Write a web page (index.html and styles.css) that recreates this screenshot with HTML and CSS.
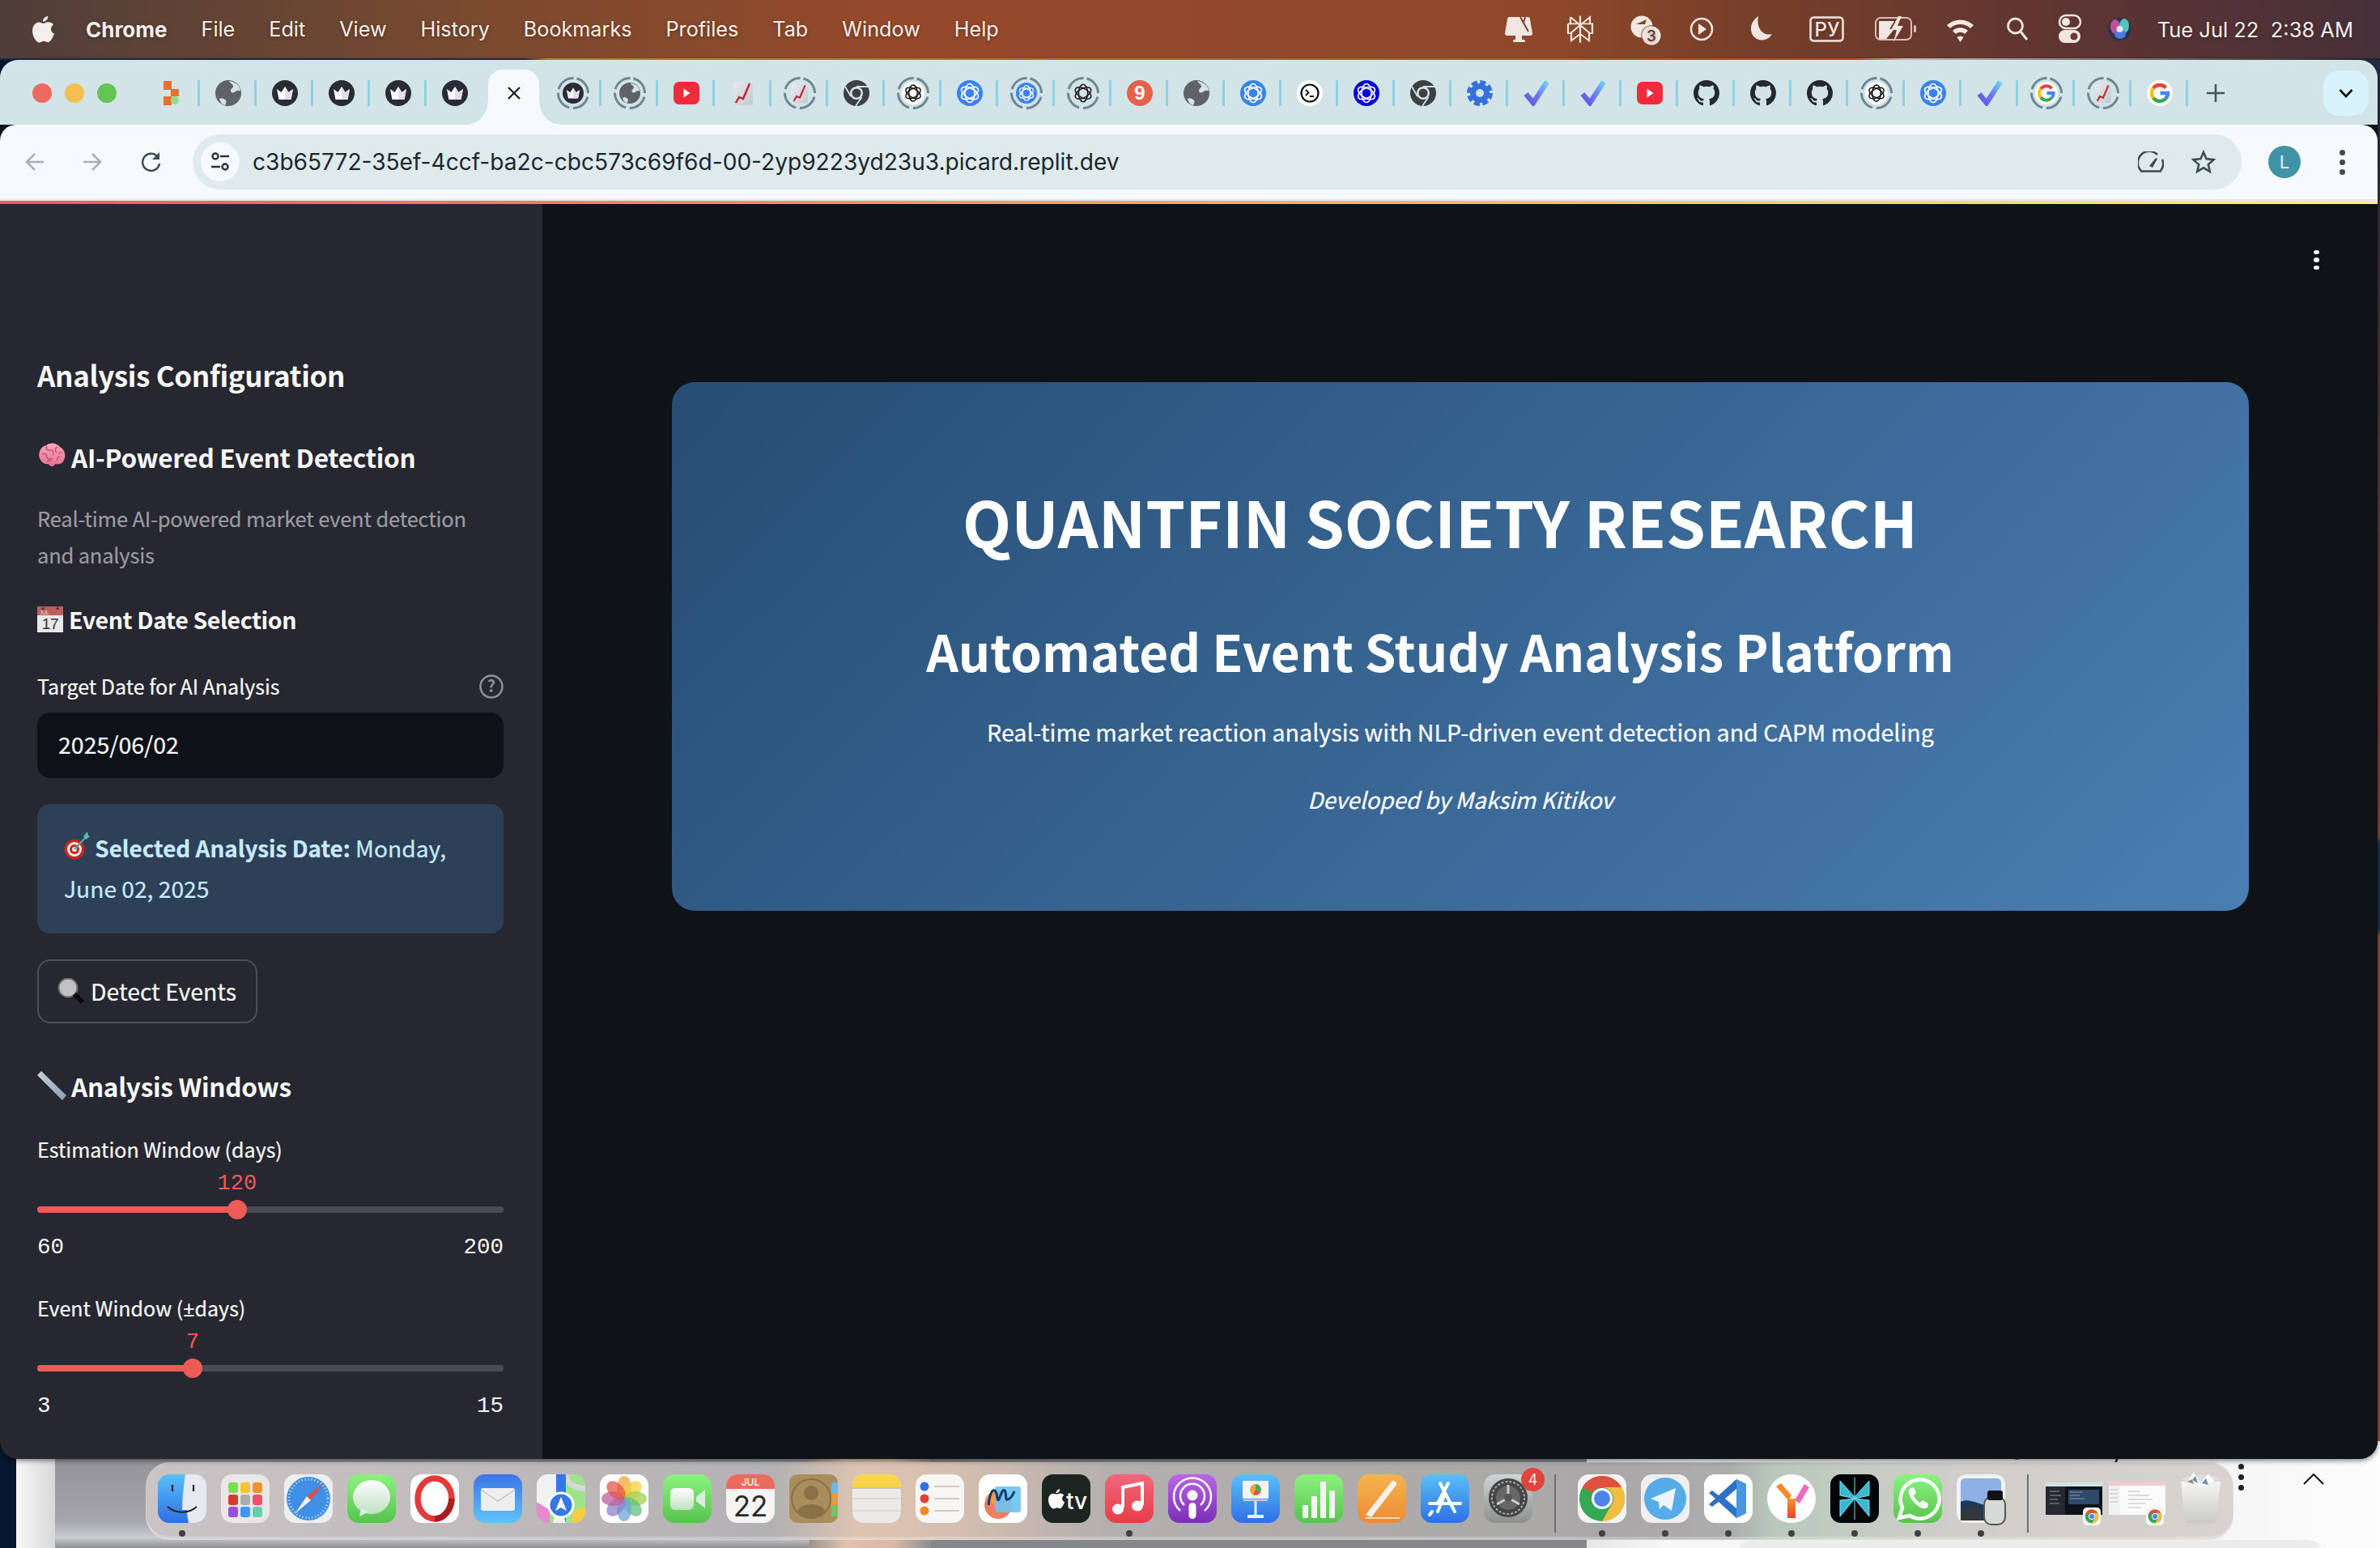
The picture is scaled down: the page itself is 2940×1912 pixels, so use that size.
FILE: index.html
```html
<!DOCTYPE html>
<html lang="en">
<head>
<meta charset="utf-8">
<title>Automated Event Study Analysis Platform</title>
<link rel="stylesheet" href="styles.css">
</head>
<body>
<svg class="defs" xmlns="http://www.w3.org/2000/svg">
  <defs>
    <linearGradient id="chk" x1="0" y1="1" x2="1" y2="0"><stop offset="0" stop-color="#6b4fe0"/><stop offset=".5" stop-color="#6d7cf0"/><stop offset="1" stop-color="#6fd2f4"/></linearGradient>
    <linearGradient id="chartbg" x1="0" y1="0" x2="1" y2="1"><stop offset="0" stop-color="#e8eaee"/><stop offset="1" stop-color="#c3c8d0"/></linearGradient>
    <linearGradient id="gBlue" x1="0" y1="0" x2="0" y2="1"><stop offset="0" stop-color="#5ac0f8"/><stop offset="1" stop-color="#2f6fe6"/></linearGradient>
    <linearGradient id="gBlueUp" x1="0" y1="0" x2="0" y2="1"><stop offset="0" stop-color="#3a75e8"/><stop offset="1" stop-color="#5fc4fa"/></linearGradient>
    <linearGradient id="gGreen" x1="0" y1="0" x2="0" y2="1"><stop offset="0" stop-color="#8cf27e"/><stop offset="1" stop-color="#56c44e"/></linearGradient>
    <linearGradient id="gRed" x1="0" y1="0" x2="0" y2="1"><stop offset="0" stop-color="#f0687a"/><stop offset="1" stop-color="#e83c48"/></linearGradient>
    <linearGradient id="gPurple" x1="0" y1="0" x2="0" y2="1"><stop offset="0" stop-color="#bb66e8"/><stop offset="1" stop-color="#7a2db8"/></linearGradient>
    <linearGradient id="gOrange" x1="0" y1="0" x2="0" y2="1"><stop offset="0" stop-color="#f6b44c"/><stop offset="1" stop-color="#ee8a38"/></linearGradient>
    <linearGradient id="gSteel" x1="0" y1="0" x2="0" y2="1"><stop offset="0" stop-color="#cfd6d8"/><stop offset="1" stop-color="#8e8e8e"/></linearGradient>
    <linearGradient id="gBubble" x1="0" y1="0" x2="0" y2="1"><stop offset="0" stop-color="#ffffff"/><stop offset="1" stop-color="#bfe0c4"/></linearGradient>
    <linearGradient id="gTrash" x1="0" y1="0" x2="0" y2="1"><stop offset="0" stop-color="#f4f4f4"/><stop offset="1" stop-color="#c9c9c7"/></linearGradient>
    <linearGradient id="gY" x1="0" y1="0" x2="0" y2="1"><stop offset="0" stop-color="#f49a2a"/><stop offset="1" stop-color="#ec3f2c"/></linearGradient>
    <linearGradient id="gBrain" x1="0" y1="0" x2="0" y2="1"><stop offset="0" stop-color="#f7a8bd"/><stop offset="1" stop-color="#e2708e"/></linearGradient>
    <linearGradient id="gRuler" x1="0" y1="0" x2="1" y2="1"><stop offset="0" stop-color="#c7d0dc"/><stop offset="1" stop-color="#8d9cb0"/></linearGradient>
    <symbol id="apple" viewBox="0 0 28 34"><path d="M20 0c.3 3-2.600 7-6.500 7C13 3.500 16.300.4 20 0zM14 9c1.600 0 3.500-1.700 6.500-1.700 2.300 0 4.900 1 6.500 3.500-4.600 2.700-4 9.500 1 11.500-1.500 4.200-4.500 11-8 11-2 0-3-1.400-5.300-1.400S11 33.800 9 33.800C5 33.800 0 25.500 0 18.800 0 12 4.200 7.600 8.500 7.600c2.300 0 4 1.400 5.500 1.400z"/></symbol>
    <symbol id="ring" viewBox="0 0 40 40"><circle cx="20" cy="20" r="18.500" fill="none" stroke="#6d8891" stroke-width="3" stroke-dasharray="24.300 4.750" transform="rotate(-76 20 20)"/></symbol>
    <symbol id="crown" viewBox="0 0 32 32"><circle cx="16" cy="16" r="16" fill="#292b36"/><path d="M6 11l5.500 4L16 8l4.500 7L26 11l-2.500 13h-15z" fill="#fff"/><path d="M16 8l4.500 7L26 11l-2.500 13H16z" fill="#dfe1e6"/></symbol>
    <symbol id="globe" viewBox="0 0 32 32"><circle cx="16" cy="16" r="16" fill="#5f6368"/><path d="M17 1c1 3 4 3 5 6 1 2-3 3-3 6s4 3 6 1 4-1 6-1c-.500-6-6-11-14-12zM5 23c3-2 6 0 8 2 1 2 0 4-1 6-4-1-6-4-7-8z" fill="#d3e4e9"/></symbol>
    <symbol id="knot" viewBox="0 0 32 32"><g fill="none" stroke="currentColor" stroke-width="1.600"><ellipse cx="16" cy="16" rx="6" ry="11.500"/><ellipse cx="16" cy="16" rx="6" ry="11.500" transform="rotate(60 16 16)"/><ellipse cx="16" cy="16" rx="6" ry="11.500" transform="rotate(120 16 16)"/></g></symbol>
    <symbol id="kblue" viewBox="0 0 32 32"><circle cx="16" cy="16" r="16" fill="#3a82ee"/><use href="#knot" color="#fff"/></symbol>
    <symbol id="knavy" viewBox="0 0 32 32"><circle cx="16" cy="16" r="16" fill="#0505dc"/><use href="#knot" color="#fff"/></symbol>
    <symbol id="kwhite" viewBox="0 0 32 32"><circle cx="16" cy="16" r="16" fill="#fff"/><use href="#knot" color="#111"/></symbol>
    <symbol id="kplain" viewBox="0 0 32 32"><use href="#knot" color="#1c1c1c"/></symbol>
    <symbol id="yt" viewBox="0 0 32 32"><rect x="0" y="2" width="32" height="28" rx="7" fill="#ee2c3c"/><path d="M12.500 10.500l8 5.500-8 5.500z" fill="#fff"/></symbol>
    <symbol id="chart" viewBox="0 0 32 32"><rect x="4" y="2" width="24" height="29" rx="2" fill="url(#chartbg)"/><path d="M7 28l4-7 5 2 3-7 5-12" fill="none" stroke="#c3202c" stroke-width="2.400"/></symbol>
    <symbol id="cdark" viewBox="0 0 32 32"><circle cx="16" cy="16" r="16" fill="#3c4043"/><circle cx="16" cy="16" r="8" fill="#d3e4e9"/><circle cx="16" cy="16" r="5.500" fill="#3c4043"/><path d="M16 8h15M9 20L2 8M22.500 21L15 32" stroke="#d3e4e9" stroke-width="1.800"/></symbol>
    <symbol id="nine" viewBox="0 0 32 32"><circle cx="16" cy="16" r="16" fill="#e5614a"/><text x="16" y="24" text-anchor="middle" class="svgt-nine">9</text></symbol>
    <symbol id="term" viewBox="0 0 32 32"><circle cx="16" cy="16" r="16" fill="#fff"/><circle cx="16" cy="16" r="10.500" fill="none" stroke="#111" stroke-width="2.200"/><path d="M11 12l3.500 3.500L11 19M16 20h5" fill="none" stroke="#111" stroke-width="1.800"/></symbol>
    <symbol id="gear" viewBox="0 0 32 32"><circle cx="16" cy="16" r="13" fill="none" stroke="#3571dc" stroke-width="6" stroke-dasharray="6.800 3.400"/><circle cx="16" cy="16" r="8.500" fill="none" stroke="#3571dc" stroke-width="7"/></symbol>
    <symbol id="check" viewBox="0 0 32 32"><path d="M3 17l9 11L29 2" fill="none" stroke="url(#chk)" stroke-width="6.500"/></symbol>
    <symbol id="gh" viewBox="0 0 16 16"><path fill="#24282f" d="M8 0C3.580 0 0 3.580 0 8c0 3.540 2.290 6.530 5.470 7.590.4.070.55-.17.55-.38 0-.19-.01-.82-.01-1.490-2.010.37-2.530-.49-2.690-.94-.09-.23-.48-.94-.82-1.130-.28-.15-.68-.52-.01-.53.63-.01 1.080.58 1.230.82.72 1.210 1.870.87 2.330.66.07-.52.28-.87.51-1.070-1.780-.2-3.640-.89-3.640-3.950 0-.87.31-1.590.82-2.150-.08-.2-.36-1.020.08-2.120 0 0 .67-.21 2.200.82.64-.18 1.320-.27 2-.27.68 0 1.360.09 2 .27 1.530-1.040 2.200-.82 2.200-.82.44 1.100.16 1.920.08 2.120.51.56.82 1.270.82 2.150 0 3.070-1.870 3.750-3.650 3.950.29.25.54.73.54 1.480 0 1.070-.01 1.930-.01 2.200 0 .21.15.46.55.38A8.013 8.013 0 0016 8c0-4.420-3.580-8-8-8z"/></symbol>
    <symbol id="goog" viewBox="0 0 32 32"><circle cx="16" cy="16" r="16" fill="#fff"/><g fill="none" stroke-width="4.500"><path d="M23.500 9.500A10 10 0 0 0 8 10" stroke="#ea4335"/><path d="M8 10a10 10 0 0 0 0 12" stroke="#fbbc05"/><path d="M8 22a10 10 0 0 0 15 1" stroke="#34a853"/><path d="M23 23a10 10 0 0 0 3-7H16.500" stroke="#4285f4"/></g></symbol>
    <symbol id="figm" viewBox="0 0 32 32"><rect x="6" y="1" width="10" height="11" fill="#e9702f"/><rect x="15" y="11" width="10" height="9" fill="#e9702f"/><rect x="6" y="20" width="10" height="11" fill="#e9702f"/><circle cx="20" cy="25" r="5" fill="#8ee08a"/></symbol>
    <symbol id="chrome" viewBox="0 0 60 60"><circle cx="30" cy="30" r="28" fill="#34a853"/><path d="M30 2a28 28 0 0 1 24.200 14H30a14 14 0 0 0-12.100 7L5.800 16A28 28 0 0 1 30 2z" fill="#e0513f"/><path d="M54.200 16A28 28 0 0 1 30 58l12.100-21A14 14 0 0 0 30 16z" fill="#f3bd42"/><circle cx="30" cy="30" r="13" fill="#fff"/><circle cx="30" cy="30" r="10" fill="#4d83ea"/></symbol>
  </defs>
</svg>

<div class="desktop">
  <header class="menubar">
    <svg class="apple-logo" width="27" height="33"><use href="#apple"/></svg>
    <span class="menu-app">Chrome</span>
    <span>File</span><span>Edit</span><span>View</span><span>History</span><span>Bookmarks</span><span>Profiles</span><span>Tab</span><span>Window</span><span>Help</span>
    <div class="status">
      <svg class="st" width="39" height="40"><path d="M7 5h22c2 0 3 1 3 3l3 17c0 2-1 3-3 3H4c-2 0-3-1-3-3L4 8c0-2 1-3 3-3z" class="st-f"/><path d="M20 5l10 18M24 12l2-7" fill="none" stroke="#7a4030" stroke-width="2"/><rect x="14" y="28" width="8" height="6" class="st-f"/><rect x="11" y="33" width="15" height="3" rx="1.500" class="st-f"/></svg>
      <svg class="st" width="38" height="40"><g class="st-s" transform="translate(0 3.500) scale(1 .83)"><path d="M15 0v40M3 2l12 12L27 2v10M3 2v10M0 12h30v14h-4M0 12v14h4M15 14L4 25v12l11-10 11 10V25z"/></g></svg>
      <svg class="st" width="33" height="40"><circle cx="13" cy="17" r="13.500" class="st-f"/><path d="M6 14l13-6-2 6z" fill="#7d4530"/><circle cx="25" cy="28" r="13" fill="#7d4530" fill-opacity=".6"/><circle cx="25" cy="28" r="11.500" class="st-f"/><text x="25" y="35" text-anchor="middle" class="svgt-three">3</text></svg>
      <svg class="st" width="33" height="40"><circle cx="14" cy="20" r="13" fill="none" stroke="#f2e6e2" stroke-width="2.500"/><path d="M10 13l10 7-10 7z" class="st-f"/></svg>
      <svg class="st" width="34" height="40"><path d="M11 4C4 9 0 16 3 25c3 9 15 11 22 5 1-1 2-3 3-4-10 3-20-6-17-22z" class="st-f"/></svg>
      <svg class="st" width="41" height="40"><rect x="1.500" y="1.500" width="40" height="29" rx="4" transform="translate(0 4)" fill="none" stroke="#f2e6e2" stroke-width="2.500"/><text x="22" y="29" text-anchor="middle" class="svgt-py">РУ</text></svg>
      <svg class="st" width="48" height="40"><rect x="1" y="6" width="44" height="27" rx="6" fill="none" stroke="#d9bfb6" stroke-width="2"/><rect x="48" y="15" width="3" height="9" rx="1.500" fill="#d9bfb6"/><path d="M5 10h19l-6 10h6L14 32H5z" class="st-f"/><path d="M29 4L20 21h7l-4 15 12-20h-7l5-12z" class="st-f"/></svg>
      <svg class="st" width="35" height="40"><path d="M1 15a24 24 0 0 1 33 0l-4 4a18 18 0 0 0-25 0z" class="st-f"/><path d="M8 22a14 14 0 0 1 19 0l-4 4a8 8 0 0 0-11 0z" class="st-f"/><path d="M17.500 36l-4-6a6 6 0 0 1 8 0z" class="st-f"/></svg>
      <svg class="st" width="24" height="40"><circle cx="10.500" cy="16" r="9" fill="none" stroke="#f2e6e2" stroke-width="2.800"/><path d="M17 23l8 10" stroke="#f2e6e2" stroke-width="3"/></svg>
      <svg class="st" width="22" height="40"><rect x="1" y="3" width="26" height="16" rx="8" fill="none" stroke="#f2e6e2" stroke-width="2.500"/><circle cx="9" cy="11" r="5" class="st-f"/><rect x="0" y="21" width="27" height="16" rx="8" class="st-f"/><circle cx="19" cy="29" r="4.500" fill="#6a3a30"/></svg>
      <svg class="st" width="20" height="40"><circle cx="13.500" cy="20" r="14" fill="#28344a"/><ellipse cx="8" cy="17" rx="6" ry="9" fill="#c04fa0"/><ellipse cx="19" cy="16" rx="6" ry="9" fill="#4fc4c0"/><ellipse cx="14" cy="26" rx="7" ry="6" fill="#4a7ce0"/><circle cx="13.500" cy="20" r="4" fill="#e8e4ee"/></svg>
      <span class="clock">Tue Jul 22&nbsp;&nbsp;2:38 AM</span>
    </div>
  </header>
  <div class="topstrip"></div>

  <section class="window">
    <div class="tabstrip">
      <div class="lights"><i class="light red"></i><i class="light yellow"></i><i class="light green"></i></div>
      <div class="tabs">
        <div class="tab"><svg class="ti"><use href="#figm"/></svg></div>
        <div class="tab"><svg class="ti"><use href="#globe"/></svg></div>
        <div class="tab"><svg class="ti"><use href="#crown"/></svg></div>
        <div class="tab"><svg class="ti"><use href="#crown"/></svg></div>
        <div class="tab"><svg class="ti"><use href="#crown"/></svg></div>
        <div class="tab no-sep"><svg class="ti"><use href="#crown"/></svg></div>
        <div class="tab-active"><svg class="close-x" width="16" height="16" viewBox="0 0 16 16"><path d="M1 1l14 14M15 1L1 15" stroke="#1c1c1c" stroke-width="2.200"/></svg></div>
        <div class="tab"><svg class="tr" viewBox="0 0 40 40"><use href="#ring"/><use href="#crown" x="7" y="7" width="26" height="26"/></svg></div>
        <div class="tab"><svg class="tr" viewBox="0 0 40 40"><use href="#ring"/><use href="#globe" x="7" y="7" width="26" height="26"/></svg></div>
        <div class="tab"><svg class="ti"><use href="#yt"/></svg></div>
        <div class="tab"><svg class="ti"><use href="#chart"/></svg></div>
        <div class="tab"><svg class="tr" viewBox="0 0 40 40"><use href="#ring"/><use href="#chart" x="7" y="7" width="26" height="26"/></svg></div>
        <div class="tab"><svg class="ti"><use href="#cdark"/></svg></div>
        <div class="tab"><svg class="tr" viewBox="0 0 40 40"><use href="#ring"/><use href="#kwhite" x="6" y="6" width="28" height="28"/></svg></div>
        <div class="tab"><svg class="ti"><use href="#kblue"/></svg></div>
        <div class="tab"><svg class="tr" viewBox="0 0 40 40"><use href="#ring"/><use href="#kblue" x="7" y="7" width="26" height="26"/></svg></div>
        <div class="tab"><svg class="tr" viewBox="0 0 40 40"><use href="#ring"/><use href="#kplain" x="5" y="5" width="30" height="30"/></svg></div>
        <div class="tab"><svg class="ti"><use href="#nine"/></svg></div>
        <div class="tab"><svg class="ti"><use href="#globe"/></svg></div>
        <div class="tab"><svg class="ti"><use href="#kblue"/></svg></div>
        <div class="tab"><svg class="ti"><use href="#term"/></svg></div>
        <div class="tab"><svg class="ti"><use href="#knavy"/></svg></div>
        <div class="tab"><svg class="ti"><use href="#cdark"/></svg></div>
        <div class="tab"><svg class="ti"><use href="#gear"/></svg></div>
        <div class="tab"><svg class="ti"><use href="#check"/></svg></div>
        <div class="tab"><svg class="ti"><use href="#check"/></svg></div>
        <div class="tab"><svg class="ti"><use href="#yt"/></svg></div>
        <div class="tab"><svg class="ti"><use href="#gh"/></svg></div>
        <div class="tab"><svg class="ti"><use href="#gh"/></svg></div>
        <div class="tab"><svg class="ti"><use href="#gh"/></svg></div>
        <div class="tab"><svg class="tr" viewBox="0 0 40 40"><use href="#ring"/><use href="#kwhite" x="6" y="6" width="28" height="28"/></svg></div>
        <div class="tab"><svg class="ti"><use href="#kblue"/></svg></div>
        <div class="tab"><svg class="ti"><use href="#check"/></svg></div>
        <div class="tab"><svg class="tr" viewBox="0 0 40 40"><use href="#ring"/><use href="#goog" x="6" y="6" width="28" height="28"/></svg></div>
        <div class="tab"><svg class="tr" viewBox="0 0 40 40"><use href="#ring"/><use href="#chart" x="7" y="7" width="26" height="26"/></svg></div>
        <div class="tab"><svg class="ti"><use href="#goog"/></svg></div>
      </div>
      <svg class="newtab" width="22" height="22" viewBox="0 0 22 22"><path d="M11 0v22M0 11h22" stroke="#44555c" stroke-width="2.600"/></svg>
      <div class="tabmenu"><svg width="18" height="12" viewBox="0 0 18 12"><path d="M1.500 2l7.500 8 7.500-8" fill="none" stroke="#111" stroke-width="2.600"/></svg></div>
    </div>

    <div class="toolbar">
      <svg class="nav-back" width="24" height="24" viewBox="0 0 24 24"><path d="M23 12H2M12 2L2 12l10 10" fill="none" stroke="#a9b0b3" stroke-width="2.500"/></svg>
      <svg class="nav-fwd" width="24" height="24" viewBox="0 0 24 24"><path d="M1 12h21M12 2l10 10-10 10" fill="none" stroke="#a9b0b3" stroke-width="2.500"/></svg>
      <svg class="nav-reload" width="25" height="24" viewBox="0 0 25 24"><path d="M21 6A10.500 10.500 0 1 0 23 14" fill="none" stroke="#3d4c52" stroke-width="2.500"/><path d="M23 0v9h-9z" fill="#3d4c52"/></svg>
      <div class="omnibox">
        <span class="site-chip"><svg width="24" height="26" viewBox="0 0 24 26"><g fill="none" stroke="#27343a" stroke-width="2.400"><circle cx="6" cy="6" r="3.500"/><path d="M12 6h11M1 19h11"/><circle cx="18" cy="19" r="3.500"/></g></svg></span>
        <span class="url">c3b65772-35ef-4ccf-ba2c-cbc573c69f6d-00-2yp9223yd23u3.picard.replit.dev</span>
        <svg class="omni-gauge" width="32" height="26" viewBox="0 0 32 26"><path d="M4 24A14 14 0 1 1 24 4M30 10a14 14 0 0 1-2 14M3 24.500h26" fill="none" stroke="#3d4c52" stroke-width="2.500"/><path d="M14 18l8-10 2 1-6 11z" fill="#3d4c52"/></svg>
        <svg class="omni-star" width="30" height="30" viewBox="0 0 30 30"><path d="M15 3l3.600 8.300 9 .8-6.800 6 2 8.800L15 22.300l-7.800 4.600 2-8.800-6.800-6 9-.8z" fill="none" stroke="#3d4c52" stroke-width="2.600"/></svg>
      </div>
      <div class="avatar">L</div>
      <div class="kebab dark"><i></i><i></i><i></i></div>
    </div>
    <div class="accent"></div>

    <div class="app">
      <aside class="sidebar">
        <h2 class="sb-title">Analysis Configuration</h2>
        <h3 class="sb-h3 first-h3">
          <svg class="emoji" width="36" height="36" viewBox="0 0 36 36"><path d="M4 22C0 16 3 6 11 4c5-4 13-3 17 2 6 3 8 11 5 16-1 5-7 6-11 5-2 5-7 3-8 0-4 1-8-1-10-5z" fill="url(#gBrain)"/><path d="M12 5c-2 3 1 6 4 5s5 3 3 6M25 6c-3 1-4 5-1 7M6 15c3-2 6 0 6 3s5 4 7 2M28 18c-2 0-4 2-3 5M31 13c-2-1-4 0-4 2M12 24c2-2 4-2 5 0" fill="none" stroke="#c94f72" stroke-width="1.500"/></svg>
          <span>AI-Powered Event Detection</span>
        </h3>
        <p class="sb-desc">Real-time AI-powered market event detection<br>and analysis</p>
        <h4 class="sb-h4">
          <svg class="emoji-cal" width="32" height="32" viewBox="0 0 32 32"><rect width="32" height="32" fill="#e8e8ea"/><rect width="32" height="11" fill="#b9605f"/><circle cx="7" cy="2.500" r="1.500" fill="#333"/><circle cx="25" cy="2.500" r="1.500" fill="#333"/><text x="3" y="10" class="svgt-jul">JUL</text><text x="16" y="28" text-anchor="middle" class="svgt-17">17</text></svg>
          <span>Event Date Selection</span>
        </h4>
        <div class="field-label">
          <span>Target Date for AI Analysis</span>
          <svg class="help-ico" width="30" height="30" viewBox="0 0 30 30"><circle cx="15" cy="15" r="13.500" fill="none" stroke="#8f9096" stroke-width="2.500"/><text x="15" y="22" text-anchor="middle" class="svgt-help">?</text></svg>
        </div>
        <div class="date-input"><span>2025/06/02</span></div>
        <div class="info-box">
          <svg class="emoji-target" width="32" height="36" viewBox="0 0 32 36"><circle cx="13" cy="22" r="12.500" fill="#c8261f"/><circle cx="13" cy="22" r="9" fill="#f5efe8"/><circle cx="13" cy="22" r="6" fill="#c8261f"/><circle cx="13" cy="22" r="3" fill="#f5efe8"/><path d="M13 22L28 6" stroke="#5d9e9c" stroke-width="2.500"/><path d="M24 6l5-6 1 5 2 1-5 4z" fill="#57b7b0"/></svg>
          <strong>Selected Analysis Date:</strong> Monday,<br>June 02, 2025
        </div>
        <button class="detect-btn">
          <svg width="34" height="32" viewBox="0 0 34 32"><circle cx="13" cy="12" r="11.500" fill="#c2c2c4" stroke="#6c6c70" stroke-width="2"/><path d="M21 20l10 10" stroke="#0a0a0a" stroke-width="6"/></svg>
          <span>Detect Events</span>
        </button>
        <h3 class="sb-h3 windows-h3">
          <svg class="emoji" width="36" height="36" viewBox="0 0 36 36"><path d="M5 0l31 30-5 6L0 5z" fill="url(#gRuler)"/></svg>
          <span>Analysis Windows</span>
        </h3>

        <div class="slider slider-first">
          <div class="field-label slider-label"><span>Estimation Window (days)</span></div>
          <div class="slider-value"><span style="left:42.86%">120</span></div>
          <div class="track"><div class="fill" style="width:42.86%"><i class="thumb"></i></div></div>
          <div class="slider-range"><span>60</span><span>200</span></div>
        </div>
        <div class="slider">
          <div class="field-label slider-label"><span>Event Window (<span class="pm">±</span>days)</span></div>
          <div class="slider-value"><span style="left:33.33%">7</span></div>
          <div class="track"><div class="fill" style="width:33.33%"><i class="thumb"></i></div></div>
          <div class="slider-range"><span>3</span><span>15</span></div>
        </div>
      </aside>

      <main class="main">
        <div class="kebab light"><i></i><i></i><i></i></div>
        <section class="hero">
          <h1 class="hero-title">QUANTFIN SOCIETY RESEARCH</h1>
          <h2 class="hero-sub">Automated Event Study Analysis Platform</h2>
          <p class="hero-line">Real-time market reaction analysis with NLP-driven event detection and CAPM modeling</p>
          <p class="hero-credit"><em>Developed by Maksim Kitikov</em></p>
        </section>
      </main>
    </div>
  </section>

  <div class="wallpaper">
    <div class="wp-navy"></div>
    <div class="wp-white"></div>
    <div class="wp-photo"></div>
    <div class="wp-face"></div>
    <div class="wp-grey"></div>
    <div class="wp-page"></div>
    <span class="wp-text">Enhance Your ATS Friendly CV</span>
    <div class="wp-card"></div>
    <div class="wp-dots"><i></i><i></i><i></i></div>
    <svg class="wp-chev" width="26" height="14" viewBox="0 0 26 14"><path d="M1 13L13 1l12 12" fill="none" stroke="#111" stroke-width="2"/></svg>

    <nav class="dock">
      <div class="dock-item running"><svg viewBox="0 0 60 60"><rect width="60" height="60" rx="14" fill="url(#gBlue)"/><path d="M34 0h12a14 14 0 0 1 14 14v32a14 14 0 0 1-14 14H38c-1-5-2-10-2-16h-6c0-14 2-30 4-44z" fill="#e6eaf0"/><path d="M18 13v8M44 13v8" stroke="#222" stroke-width="2.200"/><path d="M12 40c10 9 26 9 36 0" fill="none" stroke="#222" stroke-width="2"/></svg></div>
      <div class="dock-item"><svg viewBox="0 0 60 60"><rect width="60" height="60" rx="14" fill="#e9e7e7"/><rect x="9" y="10" width="12" height="13" rx="3" fill="#7fdc55"/><rect x="24" y="10" width="12" height="13" rx="3" fill="#f6c13c"/><rect x="39" y="10" width="12" height="13" rx="3" fill="#ef9333"/><rect x="9" y="25" width="12" height="13" rx="3" fill="#d93a2e"/><rect x="24" y="25" width="12" height="13" rx="3" fill="#a8aeb0"/><rect x="39" y="25" width="12" height="13" rx="3" fill="#ee5068"/><rect x="9" y="40" width="12" height="13" rx="3" fill="#9a4ee0"/><rect x="24" y="40" width="12" height="13" rx="3" fill="#3a9af0"/><rect x="39" y="40" width="12" height="13" rx="3" fill="#62d0b0"/></svg></div>
      <div class="dock-item"><svg viewBox="0 0 60 60"><rect width="60" height="60" rx="14" fill="#eeeeee"/><circle cx="30" cy="30" r="27" fill="#3f8fe6"/><circle cx="30" cy="30" r="24" fill="none" stroke="#cfe3f7" stroke-width="3" stroke-dasharray="1 3"/><path d="M13 49L28 27l5 5z" fill="#f0f0f0"/><path d="M49 11L33 32l-5-5z" fill="#e0503f"/></svg></div>
      <div class="dock-item"><svg viewBox="0 0 60 60"><rect width="60" height="60" rx="14" fill="url(#gGreen)"/><ellipse cx="30" cy="28" rx="23" ry="21" fill="url(#gBubble)"/><path d="M17 42l-2 10 12-6z" fill="#d8edda"/></svg></div>
      <div class="dock-item"><svg viewBox="0 0 60 60"><rect width="60" height="60" rx="14" fill="#fff"/><ellipse cx="30" cy="30" rx="21" ry="25" fill="none" stroke="#e03a3a" stroke-width="7.500"/><path d="M30 55c11 0 20-11 21-25" fill="none" stroke="#a81d22" stroke-width="7.500"/></svg></div>
      <div class="dock-item"><svg viewBox="0 0 60 60"><rect width="60" height="60" rx="14" fill="url(#gBlueUp)"/><rect x="9" y="17" width="42" height="28" rx="3" fill="#eeeeee"/><path d="M9 19l21 14 21-14" fill="none" stroke="#c5c5c5" stroke-width="1.500"/></svg></div>
      <div class="dock-item"><svg viewBox="0 0 60 60"><rect width="60" height="60" rx="14" fill="#9fe48c"/><path d="M0 26V14A14 14 0 0 1 14 0h12v40L0 48z" fill="#f1f1f1"/><path d="M0 34l16 10v16H14A14 14 0 0 1 0 46z" fill="#e58ad0"/><path d="M44 60V46l16-6v6a14 14 0 0 1-14 14z" fill="#f7cd3f"/><path d="M36 0c0 10 8 16 24 18" fill="none" stroke="#d8d8d8" stroke-width="7"/><rect x="24" y="0" width="12" height="60" fill="#3478e8"/><path d="M36 60l-6-20H24l-4 20z" fill="#f1f1f1"/><circle cx="30" cy="38" r="15" fill="#3478e8" stroke="#fff" stroke-width="3"/><path d="M30 28l7 17-7-4-7 4z" fill="#fff"/></svg></div>
      <div class="dock-item"><svg viewBox="0 0 60 60"><rect width="60" height="60" rx="14" fill="#fff"/><g fill-opacity=".75"><ellipse cx="30" cy="16" rx="9" ry="14" fill="#f2a53a"/><ellipse cx="30" cy="16" rx="9" ry="14" fill="#f4d23c" transform="rotate(45 30 30)"/><ellipse cx="30" cy="16" rx="9" ry="14" fill="#a3cd4e" transform="rotate(90 30 30)"/><ellipse cx="30" cy="16" rx="9" ry="14" fill="#5fbf7d" transform="rotate(135 30 30)"/><ellipse cx="30" cy="16" rx="9" ry="14" fill="#6ba6de" transform="rotate(180 30 30)"/><ellipse cx="30" cy="16" rx="9" ry="14" fill="#8f80c8" transform="rotate(225 30 30)"/><ellipse cx="30" cy="16" rx="9" ry="14" fill="#bd5f9c" transform="rotate(270 30 30)"/><ellipse cx="30" cy="16" rx="9" ry="14" fill="#e2574a" transform="rotate(315 30 30)"/></g></svg></div>
      <div class="dock-item"><svg viewBox="0 0 60 60"><rect width="60" height="60" rx="14" fill="url(#gGreen)"/><rect x="9" y="17" width="29" height="27" rx="6" fill="url(#gBubble)"/><path d="M41 28l11-9v23l-11-9z" fill="#d9efdb"/></svg></div>
      <div class="dock-item"><svg viewBox="0 0 60 60"><rect width="60" height="60" rx="14" fill="#f6f5f3"/><path d="M0 18V14A14 14 0 0 1 14 0h32a14 14 0 0 1 14 14v4z" fill="#e96a5e"/><text x="30" y="14" text-anchor="middle" class="svgt-dock-jul">JUL</text><text x="30" y="52" text-anchor="middle" class="svgt-dock-22">22</text></svg></div>
      <div class="dock-item"><svg viewBox="0 0 60 60"><rect width="60" height="60" rx="10" fill="#a98d5a"/><rect x="52" y="10" width="8" height="14" fill="#6fb6e0"/><rect x="52" y="24" width="8" height="14" fill="#e89a3a"/><rect x="52" y="38" width="8" height="14" fill="#7ac26a"/><circle cx="27" cy="30" r="24" fill="none" stroke="#8a7145" stroke-width="2"/><circle cx="27" cy="23" r="9" fill="#8a7145"/><path d="M10 46c3-12 31-12 34 0a24 24 0 0 1-34 0z" fill="#8a7145"/></svg></div>
      <div class="dock-item"><svg viewBox="0 0 60 60"><rect width="60" height="60" rx="14" fill="#eceae6"/><path d="M0 15A14 14 0 0 1 14 0h32a14 14 0 0 1 14 14v3H0z" fill="#fbd44a"/><rect y="16" width="60" height="2" fill="#c8c5bd"/><path d="M0 30h60M0 45h60" stroke="#d7d4cf" stroke-width="1.500"/></svg></div>
      <div class="dock-item"><svg viewBox="0 0 60 60"><rect width="60" height="60" rx="14" fill="#f8f6f4"/><circle cx="11" cy="15" r="5.500" fill="#2f6fe6"/><circle cx="11" cy="30" r="5.500" fill="#e43f36"/><circle cx="11" cy="45" r="5.500" fill="#ef8a1e"/><path d="M23 15h31M23 30h31M23 45h31" stroke="#cfcdcb" stroke-width="2"/></svg></div>
      <div class="dock-item"><svg viewBox="0 0 60 60"><rect width="60" height="60" rx="14" fill="#fff"/><circle cx="24" cy="38" r="17" fill="#ee7e62"/><path d="M8 30a17 17 0 0 1 12-9v17z" fill="#f2a03c"/><rect x="20" y="15" width="32" height="32" rx="3" fill="#6cc4ee" fill-opacity=".9"/><path d="M12 38c3-24 10-22 11-8 2 8 5-14 9-10 3 4 0 13 4 11 4-1 6-5 8-10" fill="none" stroke="#0f3a78" stroke-width="3"/></svg></div>
      <div class="dock-item"><svg viewBox="0 0 60 60"><rect width="60" height="60" rx="14" fill="#1d2523"/><use href="#apple" x="8" y="18" width="20" height="25" fill="#fff"/><text x="30" y="43" class="svgt-tv">tv</text></svg></div>
      <div class="dock-item running"><svg viewBox="0 0 60 60"><rect width="60" height="60" rx="14" fill="url(#gRed)"/><path d="M22 41V16l24-5v27" fill="none" stroke="#fff" stroke-width="4"/><ellipse cx="16" cy="43" rx="7" ry="6.500" fill="#fff"/><ellipse cx="40" cy="39" rx="7" ry="6.500" fill="#fff"/></svg></div>
      <div class="dock-item"><svg viewBox="0 0 60 60"><rect width="60" height="60" rx="14" fill="url(#gPurple)"/><g fill="none" stroke="#fff" stroke-width="2.500"><path d="M15 45a23 23 0 1 1 30 0"/><path d="M20 38a15 15 0 1 1 20 0"/></g><circle cx="30" cy="26" r="6.500" fill="#fff"/><rect x="25.500" y="35" width="9" height="20" rx="4.500" fill="#fff"/></svg></div>
      <div class="dock-item"><svg viewBox="0 0 60 60"><rect width="60" height="60" rx="14" fill="url(#gBlue)"/><rect x="14" y="8" width="32" height="22" rx="1" fill="#f4f4f4"/><circle cx="30" cy="19" r="7" fill="#e8a33c"/><path d="M30 19V12a7 7 0 0 1 6 10z" fill="#3fae5a"/><path d="M30 19l6 3a7 7 0 0 1-9 3z" fill="#d9534a"/><rect x="15" y="31" width="30" height="2" fill="#c8d0d8"/><rect x="28.500" y="33" width="3" height="19" fill="#e8edf2"/><rect x="20" y="50" width="20" height="4" rx="1" fill="#eef1f4"/></svg></div>
      <div class="dock-item"><svg viewBox="0 0 60 60"><rect width="60" height="60" rx="14" fill="url(#gGreen)"/><rect x="10" y="38" width="7" height="16" rx="1" fill="#f0f5ee"/><rect x="21" y="27" width="7" height="27" rx="1" fill="#f0f5ee"/><rect x="32" y="9" width="7" height="45" rx="1" fill="#f0f5ee"/><rect x="43" y="20" width="7" height="34" rx="1" fill="#f0f5ee"/></svg></div>
      <div class="dock-item"><svg viewBox="0 0 60 60"><rect width="60" height="60" rx="14" fill="url(#gOrange)"/><path d="M10 50L42 9c2-3 8 1 6 4L17 53z" fill="#f6f1ea"/><path d="M9 54h43" stroke="#f8d6a8" stroke-width="2"/></svg></div>
      <div class="dock-item"><svg viewBox="0 0 60 60"><rect width="60" height="60" rx="14" fill="url(#gBlue)"/><path d="M30 24l-9 22M34 11L22 34M24 11l18 35M11 36h38M14 46l-3 4" fill="none" stroke="#fff" stroke-width="4" stroke-linecap="round"/></svg></div>
      <div class="dock-item"><svg viewBox="0 0 60 60"><rect width="60" height="60" rx="14" fill="url(#gSteel)"/><circle cx="30" cy="29" r="24" fill="#444"/><circle cx="30" cy="29" r="20" fill="none" stroke="#aaa" stroke-width="2" stroke-dasharray="3 2"/><circle cx="30" cy="29" r="15" fill="#666"/><path d="M30 29V13M30 29L16 37M30 29l14 8" stroke="#ccc" stroke-width="3"/><circle cx="30" cy="29" r="5" fill="#555"/></svg><span class="badge">4</span></div>
      <div class="dock-sep"></div>
      <div class="dock-item running"><svg viewBox="0 0 60 60"><rect width="60" height="60" rx="14" fill="#f4f4f4"/><use href="#chrome"/></svg></div>
      <div class="dock-item running"><svg viewBox="0 0 60 60"><rect width="60" height="60" rx="14" fill="#efefef"/><circle cx="30" cy="30" r="26" fill="#55ace8"/><path d="M12 30l31-13-5 28-10-7-5 5-1-9z" fill="#eef6fc"/></svg></div>
      <div class="dock-item running"><svg viewBox="0 0 60 60"><rect width="60" height="60" rx="14" fill="#fff"/><path d="M40 6l12 6v36l-12 6L18 34l-8 6-4-3 8-7-8-7 4-3 8 6z" fill="#2d71c4"/><path d="M40 6l12 6v36l-12 6z" fill="#4a96e0"/><path d="M40 18v24L26 30z" fill="#fff"/></svg></div>
      <div class="dock-item running"><svg viewBox="0 0 60 60"><ellipse cx="30" cy="30" rx="30" ry="30" fill="#fff"/><path d="M26 32L11 15l6-4 13 15z" fill="#f58a2a"/><path d="M34 32l12-20 6 4-12 20z" fill="#ec6ac0"/><path d="M25 30h10v24h-10z" fill="url(#gY)"/></svg></div>
      <div class="dock-item running"><svg viewBox="0 0 60 60"><rect width="60" height="60" rx="13" fill="#030608"/><path d="M30 4v52M12 8l18 20 18-20v18l-18 4-18-4zM12 52l18-22 18 22V32l-18-2-18 2z" fill="#39b8cf" stroke="#7be0ee" stroke-width="1"/></svg></div>
      <div class="dock-item running"><svg viewBox="0 0 60 60"><rect width="60" height="60" rx="14" fill="url(#gGreen)"/><path d="M7 54l4-13A24 24 0 1 1 20 51z" fill="none" stroke="#fff" stroke-width="4.500"/><path d="M21 17c-4 3-2 10 4 17s13 10 17 7l1-5-7-4-3 3c-3-1-7-6-8-9l3-3-3-7z" fill="#fff"/></svg></div>
      <div class="dock-item running"><svg viewBox="0 0 60 60" class="over"><rect width="60" height="60" rx="12" fill="#f2f2f2"/><rect x="5" y="5" width="50" height="52" rx="5" fill="#8fb0e6"/><path d="M5 34c10-5 20 2 30 4v19H5z" fill="#1c3a5c"/><path d="M5 46l14-8 12 6v13H5z" fill="#33383a"/><rect x="34" y="28" width="26" height="34" rx="9" fill="#d7d8d8" stroke="#555" stroke-width="2"/><rect x="38" y="20" width="19" height="12" rx="3" fill="#111"/></svg></div>
      <div class="dock-sep sep-2"></div>
      <div class="dock-thumb"><svg viewBox="0 0 70 53" class="over"><rect width="70" height="5" fill="#cfe2e6"/><rect y="5" width="70" height="35" fill="#0f1218"/><rect y="5" width="24" height="35" fill="#262730"/><rect x="28" y="9" width="38" height="18" fill="#2e4a68"/><path d="M30 12h16M30 16h12M30 20h18M5 11h12M5 16h14M5 21h10M5 26h12" stroke="#8b93a0" stroke-width="1"/><svg x="46" y="31" width="22" height="22" viewBox="0 0 22 22"><rect width="22" height="22" rx="5" fill="#f4f4f4"/><use href="#chrome" x="2" y="2" width="18" height="18"/></svg></svg></div>
      <div class="dock-thumb thumb-2"><svg viewBox="0 0 70 53" class="over"><rect width="70" height="4" fill="#f6c9d0"/><rect y="4" width="70" height="36" fill="#fbfbfb"/><rect y="4" width="14" height="36" fill="#f0f0f0"/><path d="M24 11h14M24 16h26M24 21h30M24 26h22M24 31h16M2 9h9M2 14h9M2 19h9M2 24h9" stroke="#bbb" stroke-width="1"/><svg x="46" y="31" width="22" height="22" viewBox="0 0 22 22"><rect width="22" height="22" rx="5" fill="#f4f4f4"/><use href="#chrome" x="2" y="2" width="18" height="18"/></svg></svg></div>
      <div class="dock-trash"><svg viewBox="0 0 53 68" class="over"><path d="M2 14h49l-5 50c-1 3-38 3-39 0z" fill="url(#gTrash)"/><path d="M3 12c3-8 45-8 47 0-4 6-43 6-47 0z" fill="#dedede"/><path d="M10 14l8-12 8 14 10-12 8 10-16 6z" fill="#f8f8f8"/><path d="M16 12l4-5 3 9zM28 16l5-6 3 8z" fill="#6d8fb0"/><path d="M10 14l6-3 2 6z" fill="#888"/></svg></div>
    </nav>
  </div>
</div>
</body>
</html>
```
FILE: styles.css
```css
* { box-sizing: border-box; }
html, body { margin: 0; padding: 0; width: 2940px; height: 1912px; overflow: hidden; }
body { font-family: "Noto Sans CJK SC", "Noto Sans CJK JP", sans-serif; background: #06162e; color: #fafafa; }
.defs { position: absolute; width: 0; height: 0; }
svg { display: block; flex: none; }
svg.over { overflow: visible; }
h1, h2, h3, h4, p { margin: 0; }

.svgt-nine { font: 700 24px "Liberation Sans", sans-serif; fill: #fff; }
.svgt-three { font: 500 19px "Inter", sans-serif; fill: #5a3a30; }
.svgt-py { font: 500 24px "Inter", sans-serif; fill: #f2e6e2; }
.svgt-jul { font: 400 7px "Liberation Sans", sans-serif; fill: #f4dede; }
.svgt-17 { font: 400 19px "Liberation Sans", sans-serif; fill: #333; }
.svgt-help { font: 700 20px "Noto Sans CJK SC", sans-serif; fill: #8f9096; }
.svgt-dock-jul { font: 500 12px "Inter", sans-serif; fill: #fff; }
.svgt-dock-22 { font: 400 35px "Inter", sans-serif; fill: #2a2a2a; }
.svgt-tv { font: 500 28px "Inter", sans-serif; fill: #fff; }

.desktop {
  width: 2940px; height: 1912px; display: flex; flex-direction: column; position: relative;
  background: linear-gradient(180deg, #1a2a48 0, #8f3f22 50%, #96452a 54%, #12305a 54.500%, #12305a 60%, #a04a28 60.500%, #a04a28 100%) right top / 40px 100% no-repeat, #06162e;
}

.menubar {
  height: 72px; flex: none; display: flex; align-items: center; gap: 42px; padding: 0 33px 0 40px;
  background: linear-gradient(90deg, #4f3e39 0, #7a4a2f 20%, #96492a 38%, #8e4829 65%, #7a4029 72%, #5c3432 88%, #47303a 100%);
  font: 400 25.200px "Inter", sans-serif; color: #f6eeea; text-shadow: 0 1px 4px rgba(0,0,0,.35);
}
.apple-logo { fill: #f6eeea; margin-right: -3px; }
.menu-app { font-weight: 700; font-size: 26px; }
.status { margin-left: auto; display: flex; align-items: center; gap: 40px; }
.st { overflow: visible; }
.st-f { fill: #f2e6e2; }
.st-s { fill: none; stroke: #f2e6e2; stroke-width: 2.200; }
.clock { white-space: nowrap; font-size: 25.500px; }

.topstrip { height: 2px; flex: none; background: linear-gradient(90deg, #152a4a 0, #152a4a 22%, #c98a3a 23%, #c0541f 78%, #cfcac2 80%, #222 100%); }

.window {
  width: 2937px; height: 1728px; flex: none; margin-bottom: -22px; position: relative; z-index: 2;
  display: flex; flex-direction: column; overflow: hidden; border-radius: 22px;
  background: #0f1217; box-shadow: 0 2px 6px rgba(0,0,0,.5);
}

.tabstrip { height: 80px; flex: none; display: flex; align-items: center; padding: 2px 11px 0 40px; background: #d3e4e9; position: relative; }
.lights { display: flex; gap: 16px; width: 104px; flex: none; }
.light { width: 24px; height: 24px; border-radius: 50%; display: block; }
.red { background: #ee6a5f; }
.yellow { background: #f6be4f; }
.green { background: #62c554; }
.tabs { display: flex; align-items: center; margin-left: 33px; height: 100%; }
.tab { width: 70px; height: 32px; display: flex; align-items: center; justify-content: center; position: relative; flex: none; }
.tab::after { content: ""; position: absolute; right: 0; top: 0; width: 3px; height: 32px; background: #8ed1e1; }
.tab.no-sep::after { display: none; }
.ti { width: 32px; height: 32px; }
.tr { width: 40px; height: 40px; }
.tab-active {
  width: 63px; margin: 0 7px 0 6px; height: 68px; align-self: flex-end; flex: none; position: relative;
  display: flex; align-items: center; justify-content: center; padding: 0 0 10px;
  background: #f6fafd; border-radius: 18px 18px 0 0;
}
.tab-active::before, .tab-active::after { content: ""; position: absolute; bottom: 0; width: 26px; height: 30px; }
.tab-active::before { right: 100%; background: radial-gradient(ellipse 26px 30px at 0 0, transparent 98%, #f6fafd 100%); }
.tab-active::after { left: 100%; background: radial-gradient(ellipse 26px 30px at 100% 0, transparent 98%, #f6fafd 100%); }
.newtab { margin-left: 23px; }
.tabmenu { margin-left: auto; width: 56px; height: 56px; border-radius: 20px; background: #d8f3fb; display: flex; align-items: center; justify-content: center; }

.toolbar { height: 92px; flex: none; display: flex; align-items: center; padding-left: 31px; background: #f6fafd; border-radius: 20px 20px 0 0; position: relative; }
.nav-fwd { margin-left: 47px; }
.nav-reload { margin-left: 48px; }
.omnibox { width: 2531px; height: 68px; flex: none; margin-left: 39px; border-radius: 34px; background: #dfeaed; display: flex; align-items: center; padding: 0 32px 0 10px; }
.site-chip { width: 48px; height: 48px; border-radius: 50%; background: #f6fafd; display: flex; align-items: center; justify-content: center; flex: none; }
.url { margin-left: 16px; font: 400 28.100px "Inter", sans-serif; color: #1c272c; white-space: nowrap; }
.omni-gauge { margin-left: auto; }
.omni-star { margin-left: 34px; }
.avatar { width: 40px; height: 40px; border-radius: 50%; margin-left: 33px; background: #3f93a5; color: #e6f6f9; font: 400 22px/40px "Inter", sans-serif; text-align: center; flex: none; }
.kebab { display: flex; flex-direction: column; align-items: center; }
.kebab i { display: block; width: 7px; height: 7px; border-radius: 50%; }
.kebab.dark { margin-left: 48px; gap: 5px; }
.kebab.dark i { background: #3d4c52; }
.accent { height: 6px; flex: none; background: linear-gradient(90deg, #ec5c58, #fdf183); border-top: 2px solid #dfe8ea; background-clip: padding-box; }

.app { flex: 1; min-height: 0; display: flex; }
.sidebar { width: 670px; flex: none; background: #262730; padding: 187px 48px 0 46px; }

.sb-title { font-size: 35px; line-height: 48px; font-weight: 700; color: #fafafa; letter-spacing: -.36px; }
.sb-h3 { font-size: 31.500px; line-height: 44px; font-weight: 700; display: flex; align-items: center; gap: 6px; letter-spacing: -.27px; }
.first-h3 { margin-top: 55px; }
.windows-h3 { margin-top: 55px; }
.sb-desc { margin-top: 31px; font-size: 25.500px; line-height: 45px; color: #9a9ca3; white-space: nowrap; letter-spacing: -.2px; -webkit-text-stroke: .2px; }
.sb-h4 { margin-top: 38px; font-size: 28.500px; line-height: 40px; font-weight: 700; display: flex; align-items: center; gap: 7px; letter-spacing: -.4px; }
.field-label { margin-top: 44px; height: 36px; font-size: 25px; line-height: 36px; display: flex; justify-content: space-between; align-items: center; color: #fafafa; -webkit-text-stroke: .2px; }
.help-ico { margin-top: 2px; }
.pm { font-family: "Noto Sans", sans-serif; }
.date-input { margin-top: 15px; height: 81px; border-radius: 16px; background: #0e1117; display: flex; align-items: center; padding: 0 26px 4px; font-size: 28.500px; -webkit-text-stroke: .2px; }
.info-box { margin-top: 32px; height: 160px; border-radius: 16px; background: #2e4057; color: #c7ebff; padding: 29px 33px 0; font-size: 28.200px; line-height: 49px; white-space: nowrap; -webkit-text-stroke: .2px; }
.emoji-target { display: inline-block; vertical-align: -4px; }
.info-box strong { font-weight: 700; font-size: 27.800px; }
.detect-btn { display: flex; align-items: center; gap: 7px; margin-top: 32px; width: 272px; height: 79px; padding: 0 0 2px 23px; border: 2px solid #4d4e58; border-radius: 16px; background: #262730; color: #fafafa; font: 400 28.400px "Noto Sans CJK SC", sans-serif; -webkit-text-stroke: .2px; }

.slider { margin-top: 41px; }
.slider.slider-first { margin-top: 38px; }
.slider-label { margin-top: 0; }
.slider-value { margin-top: 10px; height: 30px; position: relative; font: 400 27px/30px "Liberation Mono", monospace; color: #ee5a56; }
.slider-value span { position: absolute; top: 0; transform: translateX(-50%); }
.track { margin-top: 13px; height: 8px; border-radius: 4px; background: #4a4b57; }
.fill { height: 8px; border-radius: 4px 0 0 4px; background: #ee5a56; position: relative; }
.thumb { position: absolute; right: -12px; top: -8px; width: 24px; height: 24px; border-radius: 50%; background: #ee5a56; }
.slider-range { margin-top: 28px; height: 30px; display: flex; justify-content: space-between; font: 400 27.500px/30px "Liberation Mono", monospace; color: #fafafa; }

.main { flex: 1; min-width: 0; position: relative; background: #0f1217; padding: 220px 159px 0 160px; }
.kebab.light { position: absolute; top: 57px; right: 64px; gap: 4px; }
.kebab.light i { background: #fafafa; }
.hero { height: 653px; border-radius: 28px; background: linear-gradient(135deg, #264d73, #4a7eb3); padding-top: 121px; text-align: center; color: #fff; }
.hero-title { padding-right: 50px; font-size: 78.200px; line-height: 100px; font-weight: 700; }
.hero-sub { padding-right: 50px; margin-top: 68px; font-size: 62px; line-height: 84px; font-weight: 700; }
.hero-line { margin-top: 39px; font-size: 28.650px; line-height: 40px; -webkit-text-stroke: .2px; }
.hero-credit { margin-top: 43px; font-size: 27.700px; line-height: 40px; -webkit-text-stroke: .2px; }

.wallpaper { flex: 1; min-height: 0; display: flex; position: relative; }
.wp-navy { width: 20px; background: #06162e; }
.wp-white { width: 48px; background: linear-gradient(90deg, #f7f7f7, #d8d8d8); }
.wp-photo { width: 932px; background: linear-gradient(180deg, #8f8f93 0, #a6a6aa 75%, #c9ccd2 90%, #8d8f92 100%); }
.wp-face { width: 150px; background: linear-gradient(90deg, #a0948c, #dfc2ae 30%, #d8b9a4 70%, #8d8f92); }
.wp-grey { width: 810px; background: #85878a; }
.wp-page { flex: 1; background: linear-gradient(90deg, #e6e6e6, #f7f7f7 10%, #eeeeee 60%, #fdfdfd); }
.wp-text { position: absolute; left: 2240px; top: -5px; font: 400 30px/32px "Inter", sans-serif; color: #2a2a2a; white-space: nowrap; }
.wp-card { position: absolute; left: 2145px; top: 122px; width: 725px; height: 30px; background: #ececec; border-radius: 20px 20px 0 0; }
.wp-dots { position: absolute; left: 2765px; top: 28px; display: flex; flex-direction: column; gap: 6px; }
.wp-dots i { display: block; width: 7px; height: 7px; border-radius: 50%; background: #222; }
.wp-chev { position: absolute; left: 2845px; top: 40px; }

.dock {
  position: absolute; left: 180px; top: 26px; width: 2579px; height: 96px; border-radius: 30px;
  display: flex; align-items: flex-start; gap: 18px; padding: 15px 0 0 15px;
  background: linear-gradient(90deg, #cbc4c6 0, #b8b5b7 25%, #b2b1b3 30%, #dcc3b2 34%, #d8c0b0 38%, #b4afaf 46%, #a9a7a7 70%, #aeadad 76%, #b9c9bc 78%, #cfcdc9 86%, #d8d3d1 100%);
  box-shadow: inset 0 -4px 0 rgba(255,255,255,.25), inset 0 0 0 1px rgba(255,255,255,.2);
}
.dock-item { width: 60px; height: 60px; flex: none; position: relative; }
.dock-item svg { width: 60px; height: 60px; }
.dock-item.running::after { content: ""; position: absolute; left: 26px; top: 69px; width: 8px; height: 8px; border-radius: 50%; background: #3f3f44; }
.badge { position: absolute; left: 46px; top: -8px; width: 29px; height: 29px; border-radius: 50%; background: #e0453c; color: #fbe9e6; font: 400 18px/29px "Inter", sans-serif; text-align: center; }
.dock-sep { width: 2px; height: 72px; flex: none; margin: 0 9px 0 9px; background: #6e6e70; }
.sep-2 { margin: 0 3px 0 9px; }
.dock-thumb { width: 70px; height: 53px; flex: none; margin-top: 10px; }
.dock-thumb > svg { width: 70px; height: 53px; }
.thumb-2 { margin-left: -10px; }
.dock-trash { width: 53px; height: 68px; flex: none; margin-left: -1px; margin-top: -5px; }
.dock-trash svg { width: 53px; height: 68px; }
```
